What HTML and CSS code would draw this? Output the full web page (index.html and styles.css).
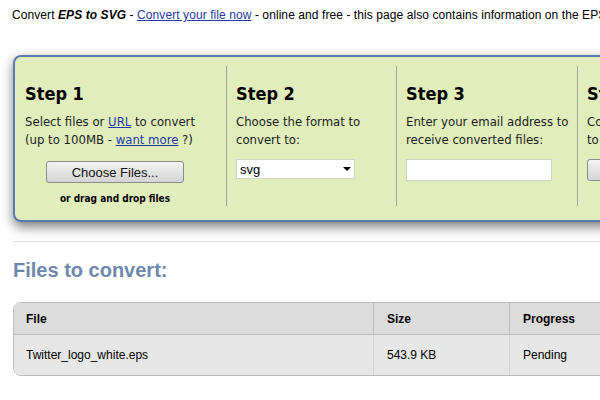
FILE: index.html
```html
<!DOCTYPE html>
<html lang="en">
<head>
<meta charset="utf-8">
<title>Convert EPS to SVG</title>
<link rel="stylesheet" href="styles.css">
</head>
<body>
<div class="page">
  <p class="intro">Convert <b><i>EPS to SVG</i></b> - <a href="#">Convert your file now</a> - online and free - this page also contains information on the EPS and SVG file extensions.</p>

  <section class="steps">
    <div class="step">
      <h2>Step 1</h2>
      <p>Select files or <a href="#">URL</a> to convert<br>(up to 100MB - <a href="#">want more</a> ?)</p>
      <div class="choose">
        <button class="btn btn-choose" type="button">Choose Files...</button>
        <div class="drop">or drag and drop files</div>
      </div>
    </div>
    <div class="step">
      <h2>Step 2</h2>
      <p>Choose the format to<br>convert to:</p>
      <span class="select-wrap">
        <select class="select"><option>svg</option></select>
        <span class="arrow"></span>
      </span>
    </div>
    <div class="step">
      <h2>Step 3</h2>
      <p>Enter your email address to<br>receive converted files:</p>
      <input class="email" type="text">
    </div>
    <div class="step">
      <h2>Step 4</h2>
      <p>Convert your files<br>to the format:</p>
      <button class="btn btn-convert" type="button">Convert</button>
    </div>
  </section>

  <hr class="sep">

  <h1 class="files-title">Files to convert:</h1>

  <table class="files">
    <thead>
      <tr><th class="c-file">File</th><th class="c-size">Size</th><th class="c-prog">Progress</th></tr>
    </thead>
    <tbody>
      <tr><td>Twitter_logo_white.eps</td><td>543.9 KB</td><td>Pending</td></tr>
    </tbody>
  </table>
</div>
</body>
</html>
```

FILE: styles.css
```css
html, body {
  margin: 0;
  padding: 0;
  background: #ffffff;
  overflow: hidden;
}

body {
  font-family: "Liberation Sans", Arial, sans-serif;
  font-size: 12px;
  color: #000;
}

.page {
  width: 800px;
  padding: 8px 0 0 13px;
}

.intro {
  margin: 0 0 0 -1px;
  line-height: 15px;
  white-space: nowrap;
  letter-spacing: 0.08px;
}

.intro a {
  color: #1f3aa6;
}

/* Steps box */
.steps {
  margin-top: 32px;
  width: 780px;
  box-sizing: border-box;
  display: grid;
  grid-template-columns: 211px 170px 181px 1fr;
  padding: 9px 0 14px;
  background: #e1eebc;
  border: 2px solid #5a7ab4;
  border-radius: 8px;
  box-shadow: 0 5px 12px rgba(0, 0, 0, 0.5);
  font-family: "DejaVu Sans Condensed", "DejaVu Sans", sans-serif;
  font-stretch: condensed;
  color: #1c1c1c;
}

.step {
  padding: 17px 0 0 9px;
  border-left: 1px solid #a3a79a;
  min-width: 0;
}

.step:first-child {
  border-left: none;
  padding-left: 10px;
}

.step h2 {
  margin: 0 0 8px;
  font-size: 18px;
  line-height: 22px;
  font-weight: bold;
  color: #000;
  white-space: nowrap;
}

.step p {
  margin: 0 0 10px;
  font-size: 13px;
  line-height: 18px;
  white-space: nowrap;
}

.step a {
  color: #1f3aa6;
}

.choose {
  width: 180px;
  text-align: center;
  padding-top: 2px;
}

.btn {
  display: block;
  height: 22px;
  box-sizing: border-box;
  border: 1px solid #8c8c8c;
  border-radius: 3px;
  background: linear-gradient(#f4f4f4, #e4e4e4 50%, #d4d4d4);
  font-family: "Liberation Sans", Arial, sans-serif;
  font-size: 13px;
  color: #111;
  padding: 0;
}

.btn-choose {
  width: 138px;
  margin: 0 auto;
}

.btn-convert {
  width: 110px;
  margin-top: 2px;
}

.drop {
  margin-top: 9px;
  font-size: 10px;
  line-height: 14px;
  font-weight: bold;
  color: #000;
}

.select-wrap {
  position: relative;
  display: inline-block;
}

.select {
  -webkit-appearance: none;
  appearance: none;
  display: block;
  width: 119px;
  height: 20px;
  box-sizing: border-box;
  border: 1px solid #d2d6c6;
  border-radius: 0;
  background: #fff;
  font-family: "Liberation Sans", Arial, sans-serif;
  font-size: 13px;
  color: #000;
  padding: 0 0 0 3px;
  margin: 0;
}

.arrow {
  position: absolute;
  right: 4px;
  top: 8px;
  width: 0;
  height: 0;
  border-left: 4px solid transparent;
  border-right: 4px solid transparent;
  border-top: 4px solid #000;
  pointer-events: none;
}

.email {
  display: block;
  width: 146px;
  height: 22px;
  box-sizing: border-box;
  border: 1px solid #cfd3c4;
  background: #fff;
  margin: 0;
  padding: 0 3px;
}

/* Separator */
.sep {
  margin: 19px 0 0;
  border: none;
  height: 1px;
  background: #dddddd;
  width: 787px;
}

.files-title {
  margin: 16px 0 20px;
  font-size: 20px;
  line-height: 24px;
  font-weight: bold;
  color: #6f88ad;
}

/* Files table */
.files {
  width: 780px;
  border-collapse: separate;
  border-spacing: 0;
  border: 1px solid #bcbcbc;
  border-radius: 8px;
  overflow: hidden;
  font-size: 12px;
}

.files th,
.files td {
  text-align: left;
  padding: 0 12px;
}

.files th {
  height: 31px;
  background: #dcdcdc;
  font-weight: bold;
  border-bottom: 1px solid #bcbcbc;
}

.files td {
  height: 40px;
  background: #e7e7e7;
}

.files th + th {
  border-left: 1px solid #bcbcbc;
  padding-left: 13px;
}

.files td + td {
  border-left: 1px solid #d3d3d3;
  padding-left: 13px;
}

.c-file {
  width: 335px;
}

.c-size {
  width: 110px;
}
```
